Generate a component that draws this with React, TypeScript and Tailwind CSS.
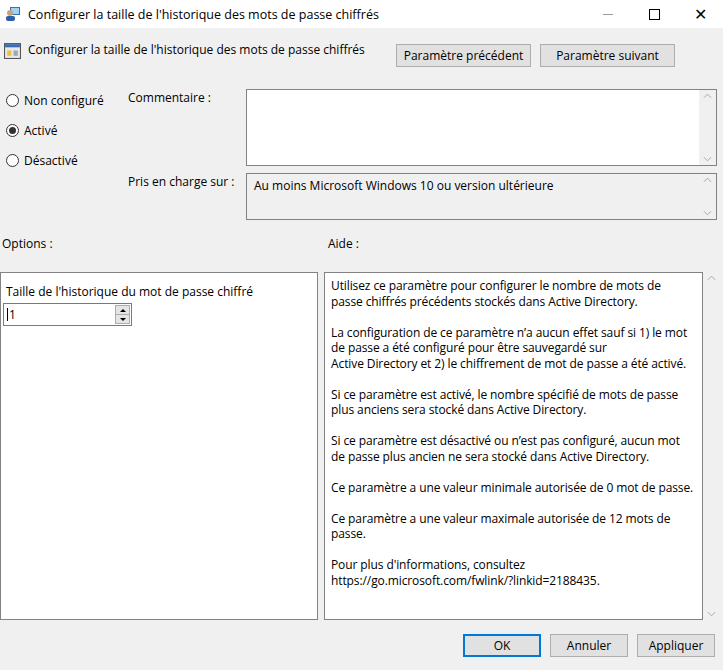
import React from "react";

const font = { fontFamily: '"Open Sans", "Noto Sans", sans-serif' };

function ScrollArrows({ bg = "bg-white" }: { bg?: string }) {
  return (
    <div className={`flex w-[17px] flex-col justify-between ${bg} py-[3px] text-[#a0a0a0]`}>
      <svg viewBox="0 0 10 6" className="mx-auto h-[6px] w-[9px]"><path d="M1 5 L5 1 L9 5" fill="none" stroke="currentColor" strokeWidth="1" /></svg>
      <svg viewBox="0 0 10 6" className="mx-auto h-[6px] w-[9px]"><path d="M1 1 L5 5 L9 1" fill="none" stroke="currentColor" strokeWidth="1" /></svg>
    </div>
  );
}

function Radio({ label, checked }: { label: string; checked?: boolean }) {
  return (
    <div className="flex h-[30px] items-center gap-[5px]">
      <div className="flex h-[13px] w-[13px] items-center justify-center rounded-full border border-[#333] bg-white">
        {checked && <div className="h-[7px] w-[7px] rounded-full bg-[#333]" />}
      </div>
      <span>{label}</span>
    </div>
  );
}

function Btn({ children, w, primary }: { children: React.ReactNode; w: string; primary?: boolean }) {
  return (
    <div className={`flex h-[23px] ${w} items-center justify-center border ${primary ? "border-[#0078d7] shadow-[inset_0_0_0_1px_#0078d7]" : "border-[#adadad]"} bg-[#e1e1e1]`}>
      {children}
    </div>
  );
}

const help = [
  ["Utilisez ce paramètre pour configurer le nombre de mots de", "passe chiffrés précédents stockés dans Active Directory."],
  ["La configuration de ce paramètre n’a aucun effet sauf si 1) le mot", "de passe a été configuré pour être sauvegardé sur", "Active Directory et 2) le chiffrement de mot de passe a été activé."],
  ["Si ce paramètre est activé, le nombre spécifié de mots de passe", "plus anciens sera stocké dans Active Directory."],
  ["Si ce paramètre est désactivé ou n’est pas configuré, aucun mot", "de passe plus ancien ne sera stocké dans Active Directory."],
  ["Ce paramètre a une valeur minimale autorisée de 0 mot de passe."],
  ["Ce paramètre a une valeur maximale autorisée de 12 mots de", "passe."],
  ["Pour plus d'informations, consultez", "https://go.microsoft.com/fwlink/?linkid=2188435."],
];

export default function App() {
  return (
    <div style={font} className="h-[670px] w-[723px] overflow-hidden bg-[#f0f0f0] text-[12px] leading-[15px] text-black">
      {/* title bar */}
      <div className="flex h-[28px] items-center bg-white">
        <svg viewBox="0 0 16 16" className="ml-[5px] h-[16px] w-[16px]">
          <rect x="5" y="1" width="10" height="8" fill="#3a6fb5" />
          <rect x="6" y="2" width="8" height="6" fill="#9fd0f5" />
          <circle cx="5" cy="7" r="3" fill="#caa27a" />
          <rect x="1" y="10" width="9" height="5" rx="2" fill="#2d5fa8" />
        </svg>
        <span className="ml-[7px] text-[12.5px]">Configurer la taille de l'historique des mots de passe chiffrés</span>
        <div className="ml-auto flex items-center">
          <div className="flex w-[46px] justify-center"><div className="h-px w-[10px] bg-[#999]" /></div>
          <div className="flex w-[46px] justify-center"><div className="h-[11px] w-[11px] border border-black" /></div>
          <div className="flex w-[46px] justify-center text-[16px] font-light">✕</div>
        </div>
      </div>

      {/* header */}
      <div className="flex items-start">
        <div className="mt-[14px] ml-[4px] flex items-center">
          <svg viewBox="0 0 16 16" className="h-[17px] w-[17px]">
            <rect x="0.5" y="1.5" width="15" height="14" fill="#e8e8e8" stroke="#555" />
            <rect x="1" y="2" width="14" height="3" fill="#3b6db3" />
            <rect x="3" y="8" width="4" height="5" fill="#f0c040" />
            <rect x="9" y="8" width="4" height="5" fill="#9ab" />
          </svg>
          <span className="ml-[7px] -mt-[3px]">Configurer la taille de l'historique des mots de passe chiffrés</span>
        </div>
        <div className="ml-auto mt-[16px] mr-[48px] flex gap-[9px]">
          <Btn w="w-[135px]">Paramètre précédent</Btn>
          <Btn w="w-[135px]">Paramètre suivant</Btn>
        </div>
      </div>

      {/* settings */}
      <div className="mt-[22px] flex">
        <div className="w-[128px] pl-[6px] -mt-[4px]">
          <Radio label="Non configuré" />
          <Radio label="Activé" checked />
          <Radio label="Désactivé" />
        </div>
        <div className="w-[118px] pt-[1px]">
          <div className="h-[84px]">Commentaire :</div>
          <div>Pris en charge sur :</div>
        </div>
        <div className="w-[471px]">
          <div className="flex h-[77px] border border-[#828282] bg-white">
            <div className="flex-1" />
            <ScrollArrows bg="bg-[#f0f0f0]" />
          </div>
          <div className="mt-[7px] flex h-[47px] border border-[#828282] bg-[#f0f0f0]">
            <div className="flex-1 px-[7px] pt-[4px]">Au moins Microsoft Windows 10 ou version ultérieure</div>
            <ScrollArrows bg="bg-[#f0f0f0]" />
          </div>
        </div>
      </div>

      {/* labels */}
      <div className="mt-[16px] flex">
        <div className="w-[328px] pl-[2px]">Options :</div>
        <div>Aide :</div>
      </div>

      {/* panels */}
      <div className="mt-[21px] flex">
        <div className="h-[348px] w-[318px] border border-[#828282] bg-white pl-[5px] pt-[11px]">
          <div>Taille de l'historique du mot de passe chiffré</div>
          <div className="mt-[4px] -ml-[3px] flex h-[23px] w-[129px] items-center border border-[#7a7a7a] bg-white">
            <span className="ml-[3px] border-l border-black pl-px leading-[13px]">1</span>
            <div className="ml-auto mr-[1px] flex h-[19px] w-[15px] flex-col border border-[#adadad] bg-[#e5e5e5]">
              <div className="flex flex-1 items-center justify-center border-b border-[#adadad]">
                <div className="h-0 w-0 border-x-[3px] border-b-[3px] border-x-transparent border-b-black" />
              </div>
              <div className="flex flex-1 items-center justify-center">
                <div className="h-0 w-0 border-x-[3px] border-t-[3px] border-x-transparent border-t-black" />
              </div>
            </div>
          </div>
        </div>
        <div className="ml-[6px] flex h-[348px] w-[399px]">
          <div className="w-[379px] overflow-hidden border border-[#828282] bg-white pt-[5px] pl-[6px] pr-[2px] tracking-[-0.1px]">
            {help.map((p) => (
              <p key={p[0]} className="mb-[15.5px] leading-[15.5px]">
                {p.map((l) => (
                  <span key={l} className="block whitespace-nowrap">{l}</span>
                ))}
              </p>
            ))}
          </div>
          <ScrollArrows bg="bg-[#f0f0f0]" />
        </div>
      </div>

      {/* footer */}
      <div className="mt-[14px] mr-[8px] flex justify-end gap-[9px]">
        <Btn w="w-[78px]" primary>OK</Btn>
        <Btn w="w-[78px]">Annuler</Btn>
        <Btn w="w-[78px]">Appliquer</Btn>
      </div>
    </div>
  );
}
